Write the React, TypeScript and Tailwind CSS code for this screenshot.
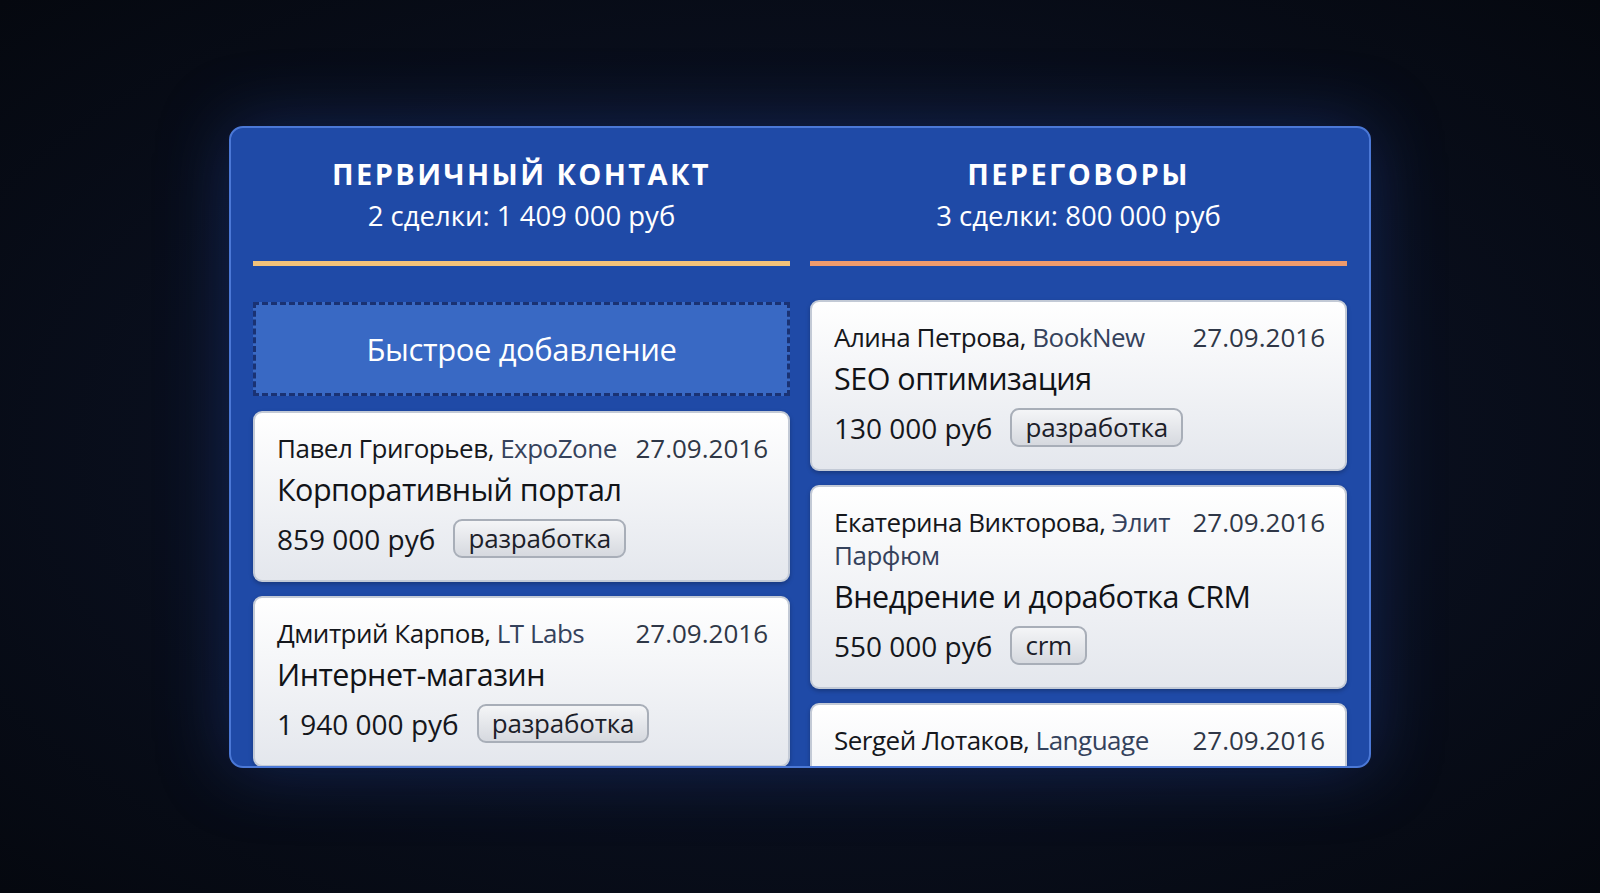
import React from "react";

type Deal = {
  person: string;
  company: string;
  date: string;
  title: string;
  price: string;
  tag: string;
};

const columns: { name: string; summary: string; bar: string; quickAdd: boolean; deals: Deal[] }[] = [
  {
    name: "ПЕРВИЧНЫЙ КОНТАКТ",
    summary: "2 сделки: 1 409 000 руб",
    bar: "bg-[#f2c27a]",
    quickAdd: true,
    deals: [
      { person: "Павел Григорьев", company: "ExpoZone", date: "27.09.2016", title: "Корпоративный портал", price: "859 000 руб", tag: "разработка" },
      { person: "Дмитрий Карпов", company: "LT Labs", date: "27.09.2016", title: "Интернет-магазин", price: "1 940 000 руб", tag: "разработка" },
    ],
  },
  {
    name: "ПЕРЕГОВОРЫ",
    summary: "3 сделки: 800 000 руб",
    bar: "bg-[#ee9a6c]",
    quickAdd: false,
    deals: [
      { person: "Алина Петрова", company: "BookNew", date: "27.09.2016", title: "SEO оптимизация", price: "130 000 руб", tag: "разработка" },
      { person: "Екатерина Викторова", company: "Элит Парфюм", date: "27.09.2016", title: "Внедрение и доработка CRM", price: "550 000 руб", tag: "crm" },
      { person: "Sergей Лотаков", company: "Language", date: "27.09.2016", title: "Локализация сайта", price: "320 000 руб", tag: "перевод" },
    ],
  },
];

function DealCard({ deal }: { deal: Deal }) {
  const words = deal.company.split(" ");
  return (
    <div className="shrink-0 rounded-[9px] border-2 border-[#c3cad6] bg-gradient-to-b from-white to-[#e4e7ed] pl-[22px] pr-[20px] pt-[19px] pb-[22px] shadow-[0_2px_4px_rgba(0,0,0,0.25)]">
      <div className="flex items-start justify-between gap-4 text-[26px] leading-[33px]">
        <p className="min-w-0 tracking-[-0.5px] text-[#15171c]">
          {deal.person},{" "}
          {words.map((w, i) => (
            <React.Fragment key={w}>
              {i > 0 && " "}
              <span className="text-[#35425c]">{w}</span>
            </React.Fragment>
          ))}
        </p>
        <span className="shrink-0 text-[#2f3747]">{deal.date}</span>
      </div>
      <div className="mt-[4px] text-[30.5px] leading-[40px] tracking-[-0.5px] text-[#111317]">{deal.title}</div>
      <div className="mt-[10px] flex h-[39px] items-center gap-[18px]">
        <span className="text-[28px] leading-[38px] text-[#15171c]">{deal.price}</span>
        <span className="rounded-[9px] border-2 border-[#a8aeb8] bg-gradient-to-b from-[#f4f5f7] to-[#d6d9df] px-[13px] text-[26px] leading-[35px] tracking-[-0.2px] text-[#1c2029]">
          {deal.tag}
        </span>
      </div>
    </div>
  );
}

export default function App() {
  return (
    <div
      className="flex h-[893px] w-[1600px] items-start justify-center overflow-hidden bg-[radial-gradient(ellipse_at_center,#101a33_0%,#0a1020_45%,#05080f_100%)] pt-[126px]"
      style={{ fontFamily: '"Open Sans", "Noto Sans", sans-serif' }}
    >
      <div className="grid h-[642px] w-[1142px] grid-cols-2 gap-[20px] overflow-hidden rounded-[14px] border-2 border-[#4b78d6] bg-[#1f4aa7] px-[22px] pt-[26px] shadow-[0_0_70px_rgba(40,80,190,0.35)]">
        {columns.map((col) => (
          <div key={col.name} className="flex min-w-0 flex-col">
            <div className="text-center text-white">
              <div className="text-[29px] font-bold leading-[40px] tracking-[2.4px]">{col.name}</div>
              <div className="mt-[2px] text-[27.5px] leading-[40px]">{col.summary}</div>
            </div>
            <div className={`mt-[25px] h-[5px] shrink-0 ${col.bar}`} />
            <div className={`flex flex-col gap-[14px] ${col.quickAdd ? "mt-[36px]" : "mt-[34px]"}`}>
              {col.quickAdd && (
                <div className="mb-[1px] flex h-[94px] shrink-0 items-center justify-center border-[3px] border-dashed border-[#1a3273] bg-[#3969c4] text-[31px] tracking-[-0.4px] text-white">
                  Быстрое добавление
                </div>
              )}
              {col.deals.map((d) => (
                <DealCard key={d.person} deal={d} />
              ))}
            </div>
          </div>
        ))}
      </div>
    </div>
  );
}
